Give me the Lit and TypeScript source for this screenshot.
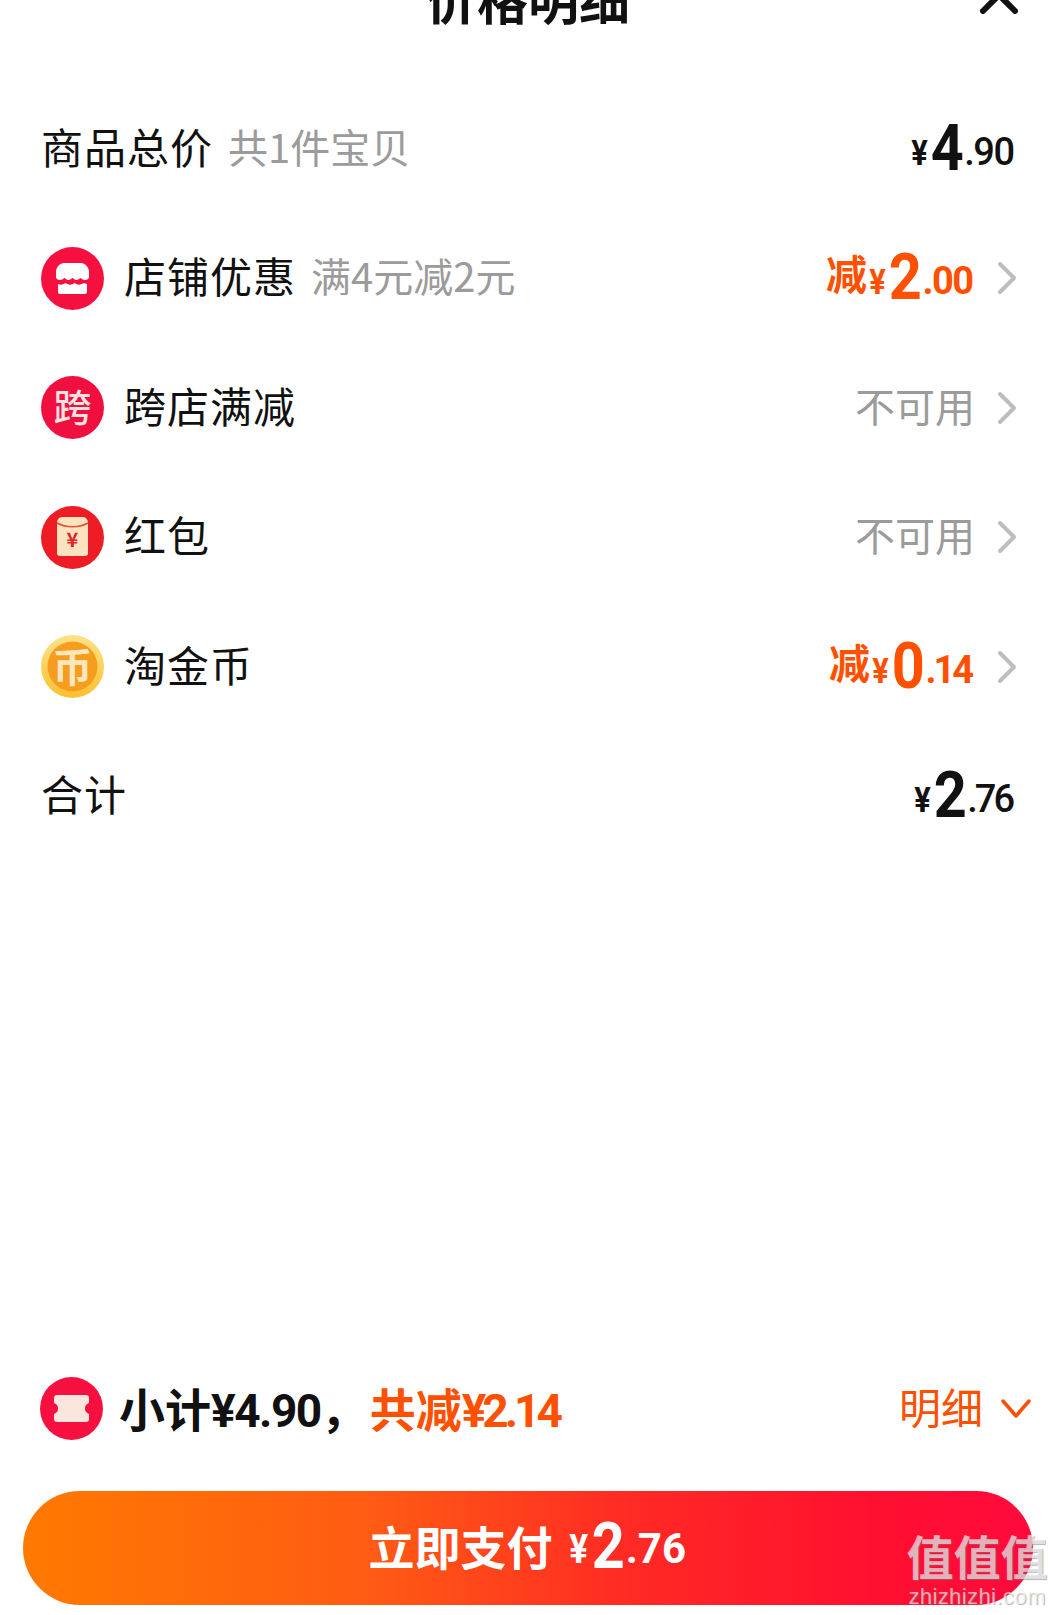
import { LitElement, css, html, nothing } from 'lit';
import { customElement } from 'lit/decorators.js';

interface PriceRow {
  icon?: string;
  label: string;
  note?: string;
  prefix?: string;
  big?: string;
  cents?: string;
  muted?: string;
  accent?: boolean;
  arrow?: boolean;
  tight?: boolean;
}

const ROWS: PriceRow[] = [
  { label: '商品总价', note: '共1件宝贝', big: '4', cents: '.90' },
  { icon: 'shop', label: '店铺优惠', note: '满4元减2元', prefix: '减', big: '2', cents: '.00', accent: true, arrow: true },
  { icon: 'cross', label: '跨店满减', muted: '不可用', arrow: true },
  { icon: 'packet', label: '红包', muted: '不可用', arrow: true },
  { icon: 'coin', label: '淘金币', prefix: '减', big: '0', cents: '.14', accent: true, arrow: true, tight: true },
  { label: '合计', big: '2', cents: '.76', tight: true },
];

@customElement('app-root')
export class AppRoot extends LitElement {
  static styles = css`
    :host {
      display: flex;
      flex-direction: column;
      position: relative;
      width: 1056px;
      height: 1615px;
      overflow: hidden;
      background: #fff;
      color: #111;
      font-family: 'Noto Sans CJK SC', 'Liberation Sans', sans-serif;
    }

    .header {
      height: 84px;
      flex: none;
      text-align: center;
    }

    .title {
      margin: -34px 0 0;
      font-size: 51px;
      line-height: 64px;
      font-weight: 700;
    }

    .close {
      position: absolute;
      top: -12px;
      right: 38px;
      width: 38px;
      height: 26px;
    }

    .row {
      display: flex;
      align-items: center;
      height: 129.5px;
      padding: 0 39px 0 41px;
    }

    .icon {
      width: 63px;
      height: 63px;
      flex: none;
      margin-right: 20px;
    }

    .icon text {
      font-family: 'Noto Sans CJK SC', sans-serif;
      text-anchor: middle;
    }

    .label {
      padding-bottom: 6px;
      font-size: 42px;
      line-height: 52px;
      letter-spacing: 1px;
    }

    .note {
      margin-left: 15px;
      padding-bottom: 6px;
      font-size: 40px;
      line-height: 52px;
      color: #9b9b9b;
    }

    .value {
      display: flex;
      align-items: baseline;
      margin-left: auto;
      font-family: Roboto, 'Liberation Sans', sans-serif;
      font-weight: 700;
    }

    .row .value.plain {
      margin-right: 2px;
    }

    .row .value.accent {
      margin-right: -2px;
    }

    .value.accent {
      color: #ff5000;
    }

    .prefix {
      font-family: 'Noto Sans CJK SC', sans-serif;
      font-size: 41px;
      line-height: 52px;
      transform: translateY(-9px);
    }

    .yen {
      font-size: 35px;
      margin: 0 2px 0 1px;
      transform: translateY(-5px) scaleX(0.88);
    }

    .big {
      font-size: 64px;
      line-height: 64px;
      margin: 0 -2px;
      transform: scaleX(0.9);
    }

    .cents {
      font-size: 38px;
      font-weight: 500;
      letter-spacing: -1.5px;
      margin-left: 1px;
      margin-right: 1.5px;
      transform: translateY(-5px);
    }

    .cents.tight {
      letter-spacing: -3px;
      margin-right: 3px;
    }

    .accent .cents {
      font-weight: 700;
    }

    .muted {
      margin-left: auto;
      margin-right: -3px;
      padding-bottom: 6px;
      font-size: 40px;
      line-height: 52px;
      color: #9b9b9b;
    }

    .chevron {
      width: 20px;
      height: 32px;
      flex: none;
      margin-left: 25px;
      overflow: visible;
    }

    .spacer {
      flex: 1;
    }

    .summary {
      display: flex;
      align-items: center;
      height: 63px;
      margin-bottom: 51px;
      padding: 0 24px 0 40px;
    }

    .summary .icon {
      margin-right: 16px;
    }

    .totals {
      font-size: 46px;
      line-height: 60px;
      font-weight: 700;
    }

    .totals .num {
      font-family: Roboto, 'Liberation Sans', sans-serif;
      font-size: 46px;
      letter-spacing: -1.5px;
    }

    .totals .num.squeeze {
      letter-spacing: -4px;
    }

    .off {
      margin-left: 3px;
      color: #ff5000;
    }

    .detail {
      display: flex;
      align-items: center;
      gap: 17px;
      margin-left: auto;
      font-size: 42px;
      line-height: 52px;
      color: #ff5000;
    }

    .detail-text {
      padding-bottom: 5px;
    }

    .detail svg {
      width: 32px;
      height: 22px;
    }

    .pay {
      display: flex;
      align-items: baseline;
      justify-content: center;
      height: 114px;
      margin: 0 23px 10px;
      box-sizing: border-box;
      padding-top: 21px;
      border-radius: 57px;
      background: linear-gradient(90deg, #ff7a00 0%, #ff5a14 35%, #ff2a24 60%, #ff0f30 85%, #ff0a3c 100%);
      color: #fff;
      font-size: 46px;
      line-height: 64px;
      font-weight: 700;
    }

    .pay .value {
      margin-left: 15px;
      transform: translateY(3px);
    }

    .pay .yen {
      font-size: 40px;
    }

    .pay .cents {
      font-size: 42px;
      font-weight: 700;
      letter-spacing: 0;
    }

    .mark {
      position: absolute;
      right: 8px;
      bottom: 6px;
      width: 142px;
      color: rgba(255, 255, 255, 0.62);
      text-shadow: 1px 1px 1px rgba(120, 120, 120, 0.55);
      text-align: center;
    }

    .mark-top {
      font-size: 47px;
      line-height: 48px;
      font-weight: 700;
      white-space: nowrap;
    }

    .mark-url {
      margin-top: 6px;
      font-family: 'Liberation Sans', sans-serif;
      font-size: 22px;
      line-height: 24px;
      letter-spacing: 0.4px;
      white-space: nowrap;
    }
  `;

  renderIcon(name?: string) {
    switch (name) {
      case 'shop':
        return html`<svg class="icon" viewBox="0 0 63 63">
          <circle cx="31.5" cy="31.5" r="31.5" fill="#f5103f" />
          <path fill="#fff" d="M23 16h17c4 0 8 4 8 9v5c0 2-2 3-4 3-2.500 0-4-2-4.500-2s-2 2-4 2-3.500-2-4-2-2 2-4 2-3.500-2-4-2-2 2-4.500 2c-2 0-4-1-4-3v-5c0-5 4-9 8-9z" />
          <path fill="#fff" d="M17 37c2 1 4 1 5.500 0 1.500-1 2.500-1 4 0s3.500 1 5 0 2.500-1 4 0 3.500 1 5 0 3.500-1 5.500 0v8c0 1-1 2-2 2H19c-1 0-2-1-2-2z" />
        </svg>`;
      case 'cross':
        return html`<svg class="icon" viewBox="0 0 63 63">
          <circle cx="31.5" cy="31.5" r="31.5" fill="#f0103f" />
          <text x="31.500" y="45" font-size="38" font-weight="500" fill="#ffe3e0">跨</text>
        </svg>`;
      case 'packet':
        return html`<svg class="icon" viewBox="0 0 63 63">
          <circle cx="31.5" cy="31.5" r="31.5" fill="#ee1c25" />
          <path fill="#fbe3c0" d="M16 17c0-3 2-6 5-6h21c3 0 5 3 5 6v30c0 2-1 3-3 3H19c-2 0-3-1-3-3z" />
          <path fill="none" stroke="#e8502f" stroke-width="1.500" d="M16 17c9 5 22 5 31 0" />
          <text x="31.500" y="41" font-size="20" font-weight="700" fill="#e0242a">¥</text>
        </svg>`;
      case 'coin':
        return html`<svg class="icon" viewBox="0 0 63 63">
          <defs>
            <linearGradient id="rim" x1="0" y1="0" x2="0" y2="1">
              <stop offset="0" stop-color="#fde28a" />
              <stop offset="1" stop-color="#fcc02e" />
            </linearGradient>
          </defs>
          <circle cx="31.5" cy="31.5" r="31.5" fill="url(#rim)" />
          <circle cx="31.5" cy="31.5" r="25" fill="#f79d1e" />
          <text x="31.500" y="47" font-size="40" font-weight="700" fill="#fbe6bd">币</text>
        </svg>`;
      default:
        return nothing;
    }
  }

  renderValue(row: PriceRow) {
    if (row.muted) return html`<span class="muted">${row.muted}</span>`;
    return html`<span class="value ${row.accent ? 'accent' : 'plain'}">
      ${row.prefix ? html`<span class="prefix">${row.prefix}</span>` : nothing}
      <span class="yen">¥</span><span class="big">${row.big}</span><span class="cents ${row.tight ? 'tight' : ''}">${row.cents}</span>
    </span>`;
  }

  renderRow(row: PriceRow) {
    return html`<div class="row">
      ${this.renderIcon(row.icon)}
      <span class="label">${row.label}</span>
      ${row.note ? html`<span class="note">${row.note}</span>` : nothing}
      ${this.renderValue(row)}
      ${row.arrow
        ? html`<svg class="chevron" viewBox="0 0 20 32">
            <path d="M3 2l14 14L3 30" fill="none" stroke="#bdbdbd" stroke-width="4" stroke-linecap="round" stroke-linejoin="round" />
          </svg>`
        : nothing}
    </div>`;
  }

  render() {
    return html`
      <div class="header">
        <h1 class="title">价格明细</h1>
        <svg class="close" viewBox="0 0 38 26">
          <path d="M3 23L19 7l16 16M19 7L3-9M19 7L35-9" fill="none" stroke="#111" stroke-width="6" stroke-linecap="round" />
        </svg>
      </div>
      ${ROWS.map((row) => this.renderRow(row))}
      <div class="spacer"></div>
      <div class="summary">
        <svg class="icon" viewBox="0 0 63 63">
          <circle cx="31.5" cy="31.5" r="31.5" fill="#f5103f" />
          <path fill="#fbe6de" d="M17 18h29c2 0 3 1 3 3v5c-3 1-4 3-4 5.500s1 4.500 4 5.500v5c0 2-1 3-3 3H17c-2 0-3-1-3-3v-5c3-1 4-3 4-5.500S17 27 14 26v-5c0-2 1-3 3-3z" />
        </svg>
        <span class="totals">小计<span class="num">¥4.90</span>，<span class="off">共减<span class="num squeeze">¥2.14</span></span></span>
        <span class="detail"><span class="detail-text">明细</span>
          <svg viewBox="0 0 32 22">
            <path d="M3 3l13 15L29 3" fill="none" stroke="#ff5000" stroke-width="3.500" stroke-linecap="round" stroke-linejoin="round" />
          </svg>
        </span>
      </div>
      <div class="pay">
        立即支付
        <span class="value"><span class="yen">¥</span><span class="big">2</span><span class="cents">.76</span></span>
      </div>
      <div class="mark">
        <div class="mark-top">值值值</div>
        <div class="mark-url">zhizhizhi.com</div>
      </div>
    `;
  }
}
